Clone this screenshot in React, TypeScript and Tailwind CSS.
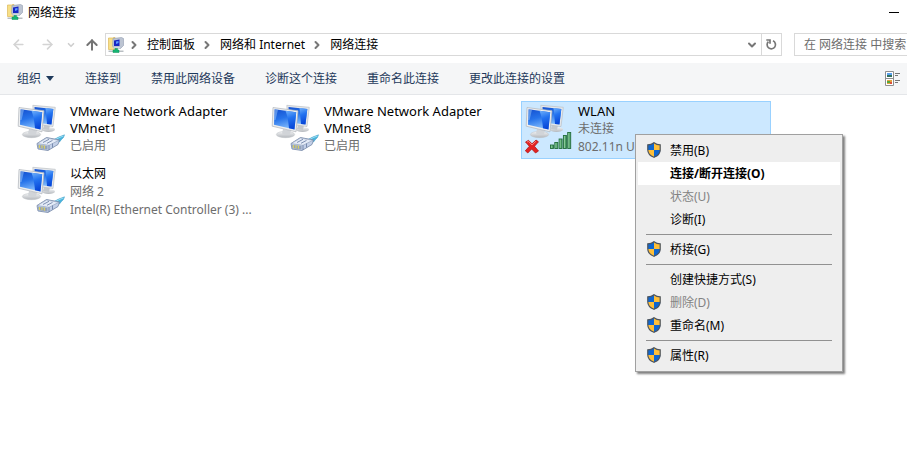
import type { ReactNode } from "react";
import { ArrowLeft, ArrowRight, ArrowUp, ChevronDown, ChevronRight } from "lucide-react";

function AppIcon() {
  return (
    <svg viewBox="0 0 16 16" className="size-4 shrink-0" aria-hidden="true">
      <path d="M0.5 1 H4.5 L5.5 0.5 H7 V12.5 H0.5 Z" fill="#f7df86" stroke="#dcb95a" strokeWidth="0.7" />
      <path d="M5 1.5 L13.5 0.5 L15.5 1.5 V8.5 L12.5 11.5 H6 L4.5 9 Z" fill="#bcc4d2" stroke="#929cae" strokeWidth="0.6" />
      <path d="M6 3.5 L11.5 2.5 V9 L6 9 Z" fill="#1726c4" />
      <path d="M8 4.5 L10.500 4 V6 L8 7 Z" fill="#5f9cff" />
      <path d="M5 10.5 L12 10 L11.500 11.500 H6 Z" fill="#d9dde4" />
      <path d="M0.500 13.500 H15.500 V15 H0.500 Z" fill="#b9bec2" />
      <path d="M7 11.500 H9.500 V13 H11 V15.500 H5 V13 H7 Z" fill="#14b573" stroke="#0c9159" strokeWidth="0.500" />
    </svg>
  );
}

function Shield() {
  return (
    <svg viewBox="0 0 14 16" className="h-4 w-[14px] shrink-0" aria-hidden="true">
      <path d="M7 0.6 C5.3 2 3 2.8 0.7 2.8 V8 C0.7 11.3 3.4 14 7 15.4 C10.6 14 13.3 11.3 13.3 8 V2.8 C11 2.8 8.700 2 7 0.6 Z" fill="#ffbf38" />
      <path d="M7 0.6 C5.3 2 3 2.800 0.7 2.8 V8 H7 Z" fill="#0f66d0" />
      <path d="M7 8 H13.3 C13.3 11.3 10.6 14 7 15.4 Z" fill="#0f66d0" />
      <path d="M7 0.8 C5.3 2.1 3 2.9 0.8 2.9 V8 C0.8 11.3 3.4 13.9 7 15.3 C10.6 13.9 13.2 11.3 13.2 8 V2.9 C11 2.9 8.7 2.1 7 0.8 Z" fill="none" stroke="#4d5560" strokeWidth="1.2" />
    </svg>
  );
}

function Monitors() {
  return (
    <>
      <defs>
        <linearGradient id="screen" x1="0" y1="0" x2="0.3" y2="1">
          <stop offset="0" stopColor="#1450cf" />
          <stop offset="0.5" stopColor="#2673ea" />
          <stop offset="1" stopColor="#7cb7fb" />
        </linearGradient>
        <linearGradient id="side" x1="0" y1="0" x2="0.2" y2="1">
          <stop offset="0" stopColor="#6fb0fa" />
          <stop offset="0.45" stopColor="#2373f0" />
          <stop offset="1" stopColor="#0847d8" />
        </linearGradient>
        <linearGradient id="stand" x1="0" y1="0" x2="0" y2="1">
          <stop offset="0" stopColor="#f4f5f6" />
          <stop offset="1" stopColor="#b3b7bc" />
        </linearGradient>
      </defs>
      <ellipse cx="31.500" cy="26.500" rx="6.500" ry="2.600" fill="url(#stand)" />
      <path d="M27 21 L33 22 L32 27 L26 26 Z" fill="#c4c8cd" />
      <path d="M15.800 2.300 L38.300 4.300 L36 23.500 L17 21 Z" fill="#e6e8eb" stroke="#b4b8be" strokeWidth="0.6" />
      <path d="M17.500 4 L36.300 5.900 L34.500 21.400 L18 19.500 Z" fill="url(#screen)" />
      <path d="M28.500 5.100 L36.300 5.900 L34.500 21.400 L30 20.900 Z" fill="url(#side)" />
      <ellipse cx="14.500" cy="31.500" rx="9.200" ry="3.200" fill="url(#stand)" stroke="#bfc2c6" strokeWidth="0.500" />
      <path d="M12 26 L20 27.500 L19 31.500 Q15 33 11 30.500 Z" fill="#d1d4d8" />
      <path d="M2 4.500 L27 7.800 L25 28.800 L1.200 23.200 Z" fill="#eceef0" stroke="#b0b4ba" strokeWidth="0.700" />
      <path d="M3.600 6.300 L25.200 9.200 L23.500 26.600 L3 21.800 Z" fill="url(#screen)" />
      <path d="M14.500 7.800 L25.200 9.200 L23.500 26.600 L18 25.300 Q17 14 14.500 7.800 Z" fill="url(#side)" />
      <path d="M3.600 6.300 L7 6.800 L4.500 17 L3.200 17 Z" fill="#9ccafc" opacity="0.500" />
    </>
  );
}

function WiredIcon() {
  return (
    <svg viewBox="0 0 48 50" className="h-[50px] w-12 shrink-0" aria-hidden="true">
      <Monitors />
      <path d="M37 36.500 Q41 34 47.500 31.800 L46.500 34.500 Q44.500 36 42.500 39 Z" fill="#49b4dc" stroke="#3a98c4" strokeWidth="0.500" />
      <path d="M39 36.300 Q43 34 46.500 33" fill="none" stroke="#a4e2f5" strokeWidth="0.9" />
      <path d="M20 40.500 L29.500 34.500 L42.500 37 L41 41.500 L31 47.500 L21 46 Z" fill="#c3d0e8" stroke="#7486a6" strokeWidth="0.8" />
      <path d="M20.300 40.600 L29.500 35 L41.800 37.300 L32 42.300 Z" fill="#e4ebf7" stroke="#8494b0" strokeWidth="0.500" />
      <path d="M21 41.800 L30.500 43 V46.500 L21.500 45.300 Z" fill="#93a2ba" />
      <path d="M22.500 42 V45 M25 42.300 V45.300 M27.500 42.500 V45.700" stroke="#d8ce67" strokeWidth="1.200" />
      <path d="M26 39.500 L32 36.300 M30 40.300 L35.500 37.400 M32 42.300 V47 M35.500 40.500 V44.500" stroke="#6579a0" strokeWidth="0.800" />
    </svg>
  );
}

function WirelessIcon() {
  return (
    <svg viewBox="0 0 48 50" className="h-[50px] w-12 shrink-0 overflow-visible" aria-hidden="true">
      <Monitors />
      <g fill="#4fa368" stroke="#246e3e" strokeWidth="0.900">
        <rect x="25.500" y="42" width="3" height="3.500" />
        <rect x="29.800" y="39.500" width="3" height="6" />
        <rect x="34.100" y="36" width="3" height="9.500" />
        <rect x="38.400" y="32.500" width="3" height="13" />
        <rect x="42.700" y="29.500" width="3" height="16" />
      </g>
      <path d="M26.600 42.500 V45 M30.900 40 V45 M35.200 36.500 V45 M39.500 33 V45 M43.800 30 V45" stroke="#98d0a5" strokeWidth="0.800" />
      <path d="M0.500 39 L3.500 37.300 L7 40.800 L11 37 L13.500 38.800 L9.500 43.300 L13.500 48 L10.500 50 L6.700 46 L2.800 50 L0.300 47.800 L4.300 43.300 Z" fill="#e32222" stroke="#ad1010" strokeWidth="0.700" />
      <path d="M2 39 L3.500 38.400 L7 42 L10.900 38.300" fill="none" stroke="#ff8d83" strokeWidth="0.900" />
    </svg>
  );
}

function ViewIcon() {
  return (
    <svg viewBox="0 0 16 16" className="size-4" aria-hidden="true">
      <path d="M0.500 0.500 H8.500 V14.500 H0.500 Z M0.500 7.500 H8.500" fill="#fff" stroke="#8f8f8f" strokeWidth="1" />
      <rect x="2" y="2" width="5" height="2" fill="#5aa0ee" />
      <rect x="2" y="4" width="5" height="2" fill="#31705e" />
      <rect x="2" y="9" width="5" height="4" fill="#e4a03c" />
      <rect x="2" y="10" width="3" height="2" fill="#55a83d" />
      <rect x="5" y="11" width="2" height="2" fill="#d8513c" />
      <path d="M10 2.500 H15 M10 4.500 H13 M10 9.500 H15 M10 11.500 H13" stroke="#777" strokeWidth="1" />
    </svg>
  );
}

function RefreshIcon() {
  return (
    <svg viewBox="0 0 13 13" className="size-[13px]" fill="none" stroke="#777" strokeWidth="1.700" aria-hidden="true">
      <path d="M8 2.800 A4.200 4.200 0 1 1 3.400 3.600" />
      <path d="M1.300 2 H5 V5.700" />
    </svg>
  );
}

function Crumb({ children }: { children: ReactNode }) {
  return (
    <li className="flex items-center">
      <ChevronRight className="mr-[6px] size-3 text-[#777]" strokeWidth={4} />
      <a href="#" className="mr-[5px] px-[1px]">{children}</a>
    </li>
  );
}

function Adapter({ icon, name, wide, lines, selected, children }: {
  icon: ReactNode;
  name: string;
  wide?: boolean;
  lines: string[];
  selected?: boolean;
  children?: ReactNode;
}) {
  return (
    <li className={`relative h-[58px] w-[250px] border ${selected ? "border-[#99d1ff] bg-[#cce8ff]" : "border-transparent"}`}>
      <div className="flex gap-[5px] pt-[1px] pl-[3px]">
        {icon}
        <div className="min-w-0 flex-1 leading-[18px]">
          <h2 className={wide ? "text-[13px] leading-[17px]" : ""}>{name}</h2>
          {lines.map((line) => (
            <p key={line} className="whitespace-nowrap text-[#6d6d6d]">{line}</p>
          ))}
        </div>
      </div>
      {children}
    </li>
  );
}

type Entry = { label: string; shield?: boolean; disabled?: boolean; active?: boolean };

const groups: Entry[][] = [
  [
    { label: "禁用(B)", shield: true },
    { label: "连接/断开连接(O)", active: true },
    { label: "状态(U)", disabled: true },
    { label: "诊断(I)" },
  ],
  [{ label: "桥接(G)", shield: true }],
  [
    { label: "创建快捷方式(S)" },
    { label: "删除(D)", shield: true, disabled: true },
    { label: "重命名(M)", shield: true },
  ],
  [{ label: "属性(R)", shield: true }],
];

function ContextMenu() {
  return (
    <div role="menu" className="absolute top-[32px] left-[113px] z-10 w-[208px] border border-[#a0a0a0] bg-[#eeeeee] px-[2px] py-1 shadow-[2px_2px_2px_rgba(0,0,0,0.5)]">
      {groups.map((group, index) => (
        <div key={index}>
          {index > 0 && <div role="separator" className="mx-2 my-[3px] h-px bg-[#919191]" />}
          {group.map((entry) => (
            <button
              key={entry.label}
              type="button"
              role="menuitem"
              disabled={entry.disabled}
              className={`flex h-[23px] w-full items-center gap-[9px] pl-[9px] text-left ${entry.active ? "bg-white font-bold" : ""} ${entry.disabled ? "text-[#838383]" : "text-black"}`}
            >
              <span className="w-[14px] pb-[2px]">{entry.shield && <Shield />}</span>
              {entry.label}
            </button>
          ))}
        </div>
      ))}
    </div>
  );
}

const commands = ["连接到", "禁用此网络设备", "诊断这个连接", "重命名此连接", "更改此连接的设置"];

export default function App() {
  return (
    <div className="min-h-screen overflow-x-hidden bg-white font-['Noto_Sans','Noto_Sans_CJK_SC',sans-serif] text-[12px] leading-[18px] text-black">
      <header className="flex h-[33px] items-start justify-between pt-1 pr-2 pl-[7px]">
        <div className="flex items-start gap-[5px]">
          <AppIcon />
          <h1 className="leading-[18px]">网络连接</h1>
        </div>
        <button type="button" aria-label="最小化" className="flex h-[17px] w-[10px] items-center">
          <span className="h-px w-full bg-black" />
        </button>
      </header>

      <div className="flex h-[23px] items-center">
        <nav aria-label="导航" className="flex w-[105px] items-center pl-[11px]">
          <button type="button" aria-label="后退" disabled><ArrowLeft className="size-[15px] text-[#d4d4d4]" strokeWidth={2.5} /></button>
          <button type="button" aria-label="前进" disabled className="ml-[14px]"><ArrowRight className="size-[15px] text-[#d4d4d4]" strokeWidth={2.5} /></button>
          <button type="button" aria-label="最近浏览的位置" disabled className="ml-[11px]"><ChevronDown className="size-[10px] text-[#cfcfcf]" strokeWidth={4} /></button>
          <button type="button" aria-label="向上" className="ml-2"><ArrowUp className="size-4 text-[#747474]" strokeWidth={3} /></button>
        </nav>
        <div className="flex h-[23px] flex-1 items-stretch border border-[#d9d9d9]">
          <div className="flex flex-1 items-center pl-[2px]">
            <AppIcon />
            <ol className="ml-1 flex leading-5">
              <Crumb>控制面板</Crumb>
              <Crumb>网络和 Internet</Crumb>
              <Crumb>网络连接</Crumb>
            </ol>
          </div>
          <button type="button" aria-label="上一个位置" className="px-[3px]"><ChevronDown className="size-3 text-[#777]" strokeWidth={4} /></button>
          <button type="button" aria-label="刷新" className="border-l border-[#d9d9d9] px-[3px]"><RefreshIcon /></button>
        </div>
        <input
          type="text"
          aria-label="搜索"
          placeholder="在 网络连接 中搜索"
          className="ml-3 h-[23px] w-[113px] border border-r-0 border-[#d9d9d9] pl-[9px] placeholder:text-[#6d6d6d]"
        />
      </div>

      <div role="toolbar" className="mt-[7px] flex h-8 items-center justify-between border-b border-[#e4e6e9] bg-[#f5f6f7] pr-[6px] pl-[17px] text-[#1e395b]">
        <div className="flex gap-[30px]">
          <button type="button" className="flex items-center gap-[5px]">
            组织
            <svg viewBox="0 0 9 5" className="h-[5px] w-[9px]" aria-hidden="true"><path d="M0 0 H8 L4 5 Z" fill="#1e395b" /></svg>
          </button>
          {commands.map((command) => (
            <button key={command} type="button">{command}</button>
          ))}
        </div>
        <button type="button" aria-label="更改视图"><ViewIcon /></button>
      </div>

      <main className="px-[13px] py-[6px]">
        <ul className="flex flex-wrap gap-1">
          <Adapter icon={<WiredIcon />} name="VMware Network Adapter VMnet1" wide lines={["已启用"]} />
          <Adapter icon={<WiredIcon />} name="VMware Network Adapter VMnet8" wide lines={["已启用"]} />
          <Adapter icon={<WirelessIcon />} name="WLAN" wide lines={["未连接", "802.11n U"]} selected>
            <ContextMenu />
          </Adapter>
          <Adapter icon={<WiredIcon />} name="以太网" lines={["网络 2", "Intel(R) Ethernet Controller (3) ..."]} />
        </ul>
      </main>
    </div>
  );
}
